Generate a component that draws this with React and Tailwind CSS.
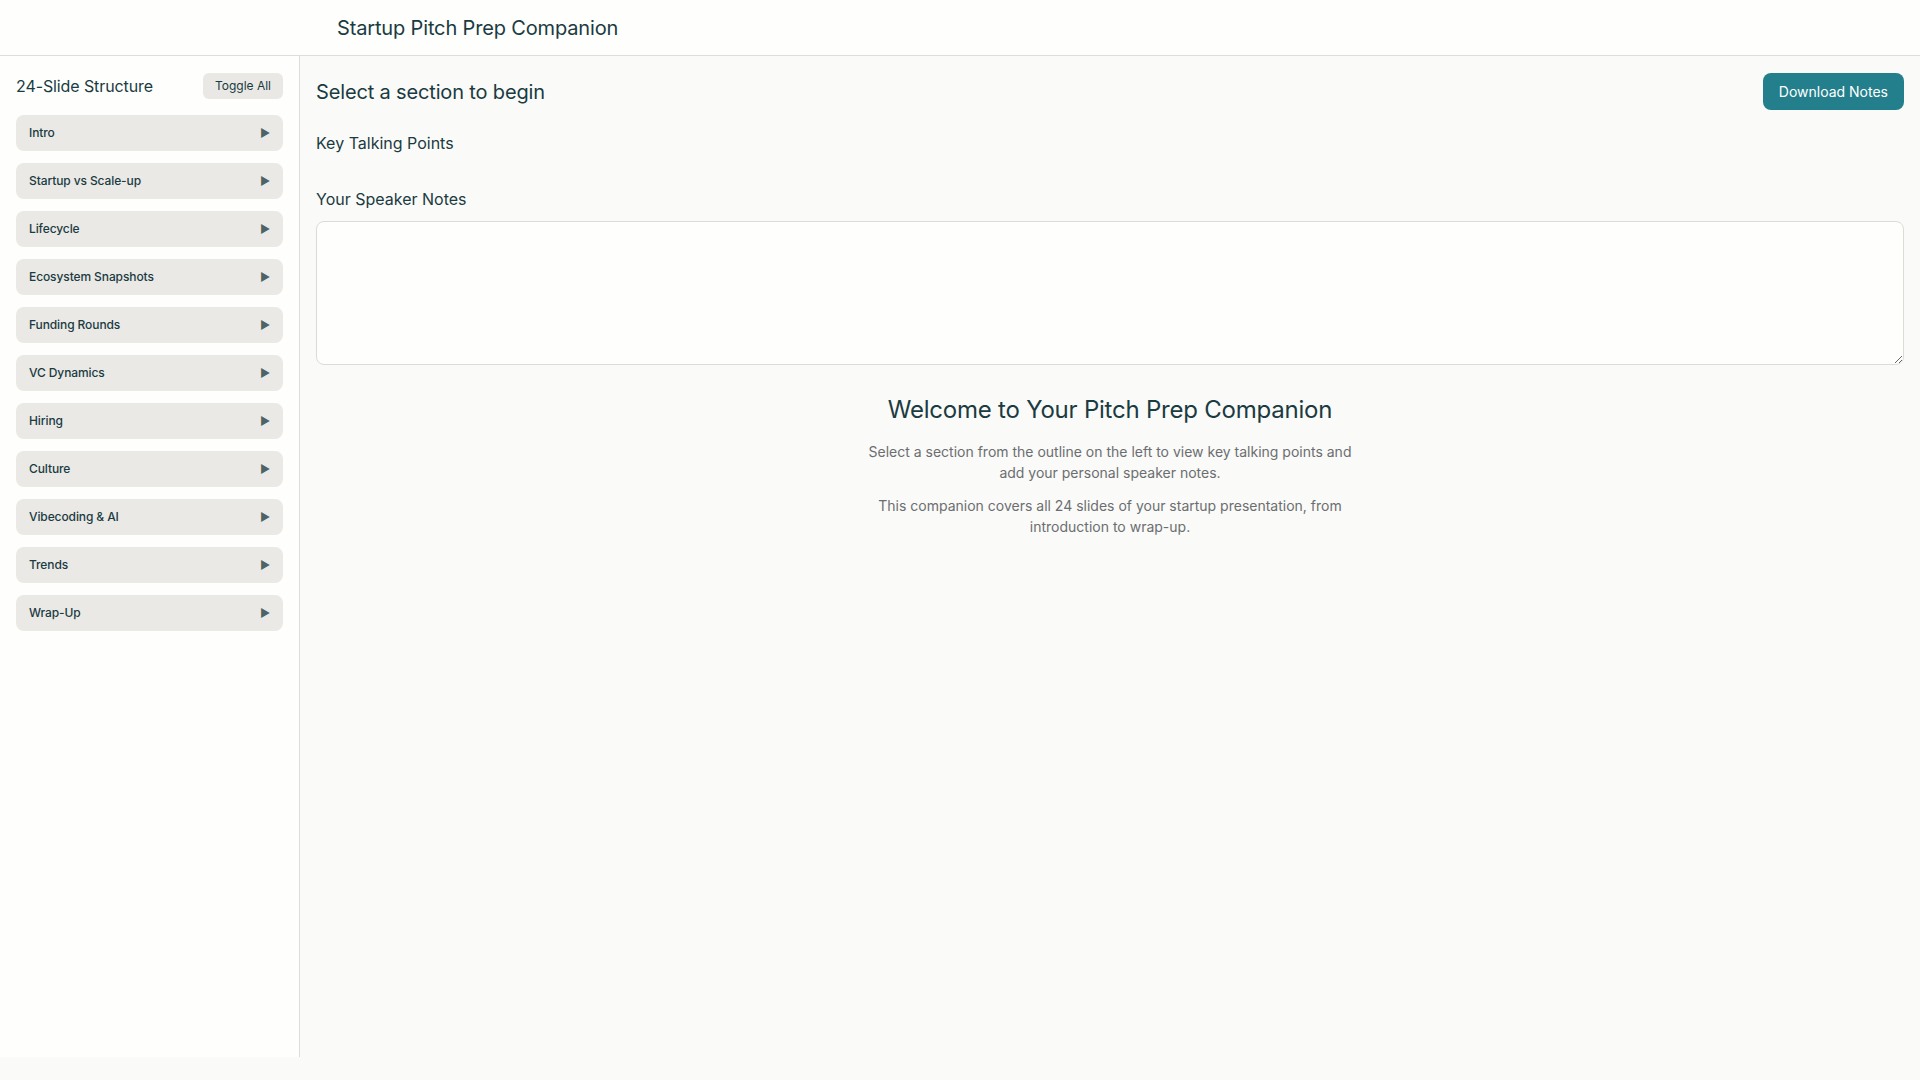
import React, { useState } from 'react';

const SECTIONS = [
    'Intro',
    'Startup vs Scale-up',
    'Lifecycle',
    'Ecosystem Snapshots',
    'Funding Rounds',
    'VC Dynamics',
    'Hiring',
    'Culture',
    'Vibecoding & AI',
    'Trends',
    'Wrap-Up',
];

const App = () => {
    const [notes, setNotes] = useState('');
    const [open, setOpen] = useState({});

    const toggleAll = () => {
        const anyOpen = Object.values(open).some(Boolean);
        const next = {};
        SECTIONS.forEach((s) => { next[s] = !anyOpen; });
        setOpen(next);
    };

    return (
        <div className="min-h-screen bg-[#fafaf8] text-[#1a3b42]" style={{ fontFamily: 'Inter, "Noto Sans", sans-serif' }}>
            {/* Header */}
            <header className="h-14 bg-[#fefefd] border-b border-[#deded9] flex items-center pl-[337px]">
                <h1 className="text-xl font-normal tracking-[-0.15px] text-[#1a3b42]">Startup Pitch Prep Companion</h1>
            </header>

            <div className="flex">
                {/* Sidebar outline */}
                <aside className="w-[300px] h-[1001px] shrink-0 bg-[#fefefd] border-r border-[#deded9] p-4">
                    <div className="flex items-center justify-between mb-4 pt-px">
                        <h2 className="text-base font-normal tracking-[-0.1px] text-[#1a3b42]">24-Slide Structure</h2>
                        <button onClick={toggleAll} className="h-[26px] px-3 rounded-md bg-[#e9e8e5] text-xs text-[#1a3b42]">
                            Toggle All
                        </button>
                    </div>
                    <div className="flex flex-col gap-3">
                        {SECTIONS.map((s) => (
                            <button
                                key={s}
                                onClick={() => setOpen((p) => ({ ...p, [s]: !p[s] }))}
                                className="h-9 w-full rounded-lg bg-[#eae9e6] px-[13px] flex items-center justify-between text-xs font-medium tracking-[-0.1px] text-[#1a3b42]"
                            >
                                <span>{s}</span>
                                <span className="text-[11px] text-[#4d6366]">{open[s] ? '▼' : '▶'}</span>
                            </button>
                        ))}
                    </div>
                </aside>

                {/* Main content */}
                <main className="flex-1 px-4 pb-4 pt-[17px]">
                    <div className="flex items-center justify-between">
                        <h2 className="text-xl font-normal tracking-[-0.15px] text-[#1a3b42]">Select a section to begin</h2>
                        <button className="h-[37px] px-4 rounded-lg bg-[#237f8b] text-white text-sm">Download Notes</button>
                    </div>

                    <h3 className="mt-[21px] text-base font-normal text-[#1a3b42]">Key Talking Points</h3>

                    <h3 className="mt-[32px] text-base font-normal text-[#1a3b42]">Your Speaker Notes</h3>
                    <textarea
                        value={notes}
                        onChange={(e) => setNotes(e.target.value)}
                        className="mt-[10px] block w-full h-[144px] rounded-lg border border-[#dcdcd7] bg-[#fefefd] p-3 text-sm outline-none"
                    />

                    <div className="mt-[29px] flex flex-col items-center text-center">
                        <h2 className="text-2xl font-normal tracking-[-0.22px] text-[#1a3b42]">Welcome to Your Pitch Prep Companion</h2>
                        <p className="mt-[15px] max-w-[490px] text-sm leading-[21px] text-[#6b6e70]">
                            Select a section from the outline on the left to view key talking points and add your personal speaker notes.
                        </p>
                        <p className="mt-3 max-w-[490px] text-sm leading-[21px] text-[#6b6e70]">
                            This companion covers all 24 slides of your startup presentation, from introduction to wrap-up.
                        </p>
                    </div>
                </main>
            </div>
        </div>
    );
};

export default App;
